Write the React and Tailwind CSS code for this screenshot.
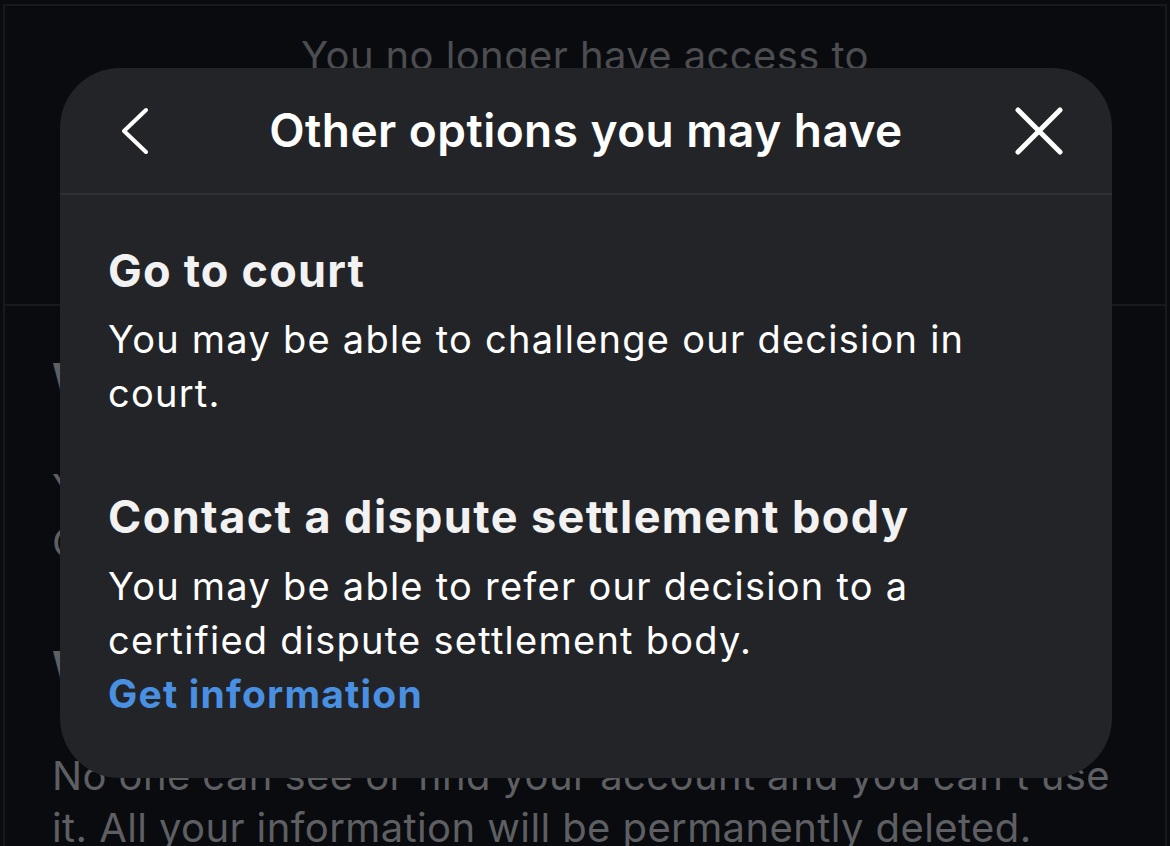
import React from "react";

const font = { fontFamily: "Inter, 'Noto Sans', sans-serif" };

function Chevron() {
  return (
    <svg width="30" height="48" viewBox="0 0 30 48" fill="none">
      <polyline points="26,3 4,24 26,45" stroke="#fff" strokeWidth="4" strokeLinecap="round" strokeLinejoin="round" />
    </svg>
  );
}

function Close() {
  return (
    <svg width="50" height="50" viewBox="0 0 50 50" fill="none">
      <path d="M4 4 L46 46 M46 4 L4 46" stroke="#fff" strokeWidth="5" strokeLinecap="round" />
    </svg>
  );
}

export default function App() {
  return (
    <div className="relative w-[1170px] h-[846px] overflow-hidden bg-[#0a0b0e]" style={font}>
      {/* background page */}
      <div className="mt-[4px] mx-[3px] border-t-2 border-x-2 border-[#18191d] h-[842px] flex flex-col">
        <div className="h-[300px] shrink-0 border-b-2 border-[#18191d] flex justify-center pt-[25px]">
          <div className="text-[40px] leading-[50px] text-[#4c4d51] tracking-[0.4px]">You no longer have access to</div>
        </div>
        <div className="flex flex-col pl-[47px] pr-[20px] text-[#5e5f63] text-[40px] leading-[54px] tracking-[0.4px]">
          <div className="mt-[46px] font-bold text-[42px]">What happens next</div>
          <div className="mt-[56px]">You can download a copy of your</div>
          <div>Check your information before it's deleted.</div>
          <div className="mt-[70px] font-bold text-[42px]">What happens if you do nothing</div>
          <div className="mt-[56px] leading-[52px] whitespace-nowrap">No one can see or find your account and you can't use</div>
          <div className="leading-[52px] whitespace-nowrap">it. All your information will be permanently deleted.</div>
        </div>
      </div>

      {/* modal */}
      <div className="absolute left-[60px] top-[68px] w-[1052px] h-[710px] rounded-[60px] bg-[#232428] flex flex-col">
        <div className="h-[125px] flex items-center justify-between pl-[60px] pr-[48px] relative">
          <Chevron />
          <div className="absolute inset-0 flex items-center justify-center pointer-events-none">
            <div className="text-white text-[46px] font-semibold tracking-[0.45px]">Other options you may have</div>
          </div>
          <Close />
        </div>
        <div className="h-[2px] bg-[#2f3034]" />
        <div className="pl-[48px] pr-[60px] pt-[49px] text-white">
          <div className="text-[45px] leading-[54px] font-bold text-[#f2f2f3] tracking-[1.2px]">Go to court</div>
          <div className="mt-[14px] text-[38px] leading-[54px] tracking-[1.25px]">You may be able to challenge our decision in court.</div>
          <div className="mt-[70px] text-[45px] leading-[54px] font-bold text-[#f2f2f3] tracking-[1.4px]">Contact a dispute settlement body</div>
          <div className="mt-[15px] text-[38px] leading-[54px] tracking-[1.25px]">You may be able to refer our decision to a certified dispute settlement body.</div>
          <div className="text-[39px] leading-[54px] font-bold text-[#4a90e2] tracking-[1.2px]">Get information</div>
        </div>
      </div>
    </div>
  );
}
